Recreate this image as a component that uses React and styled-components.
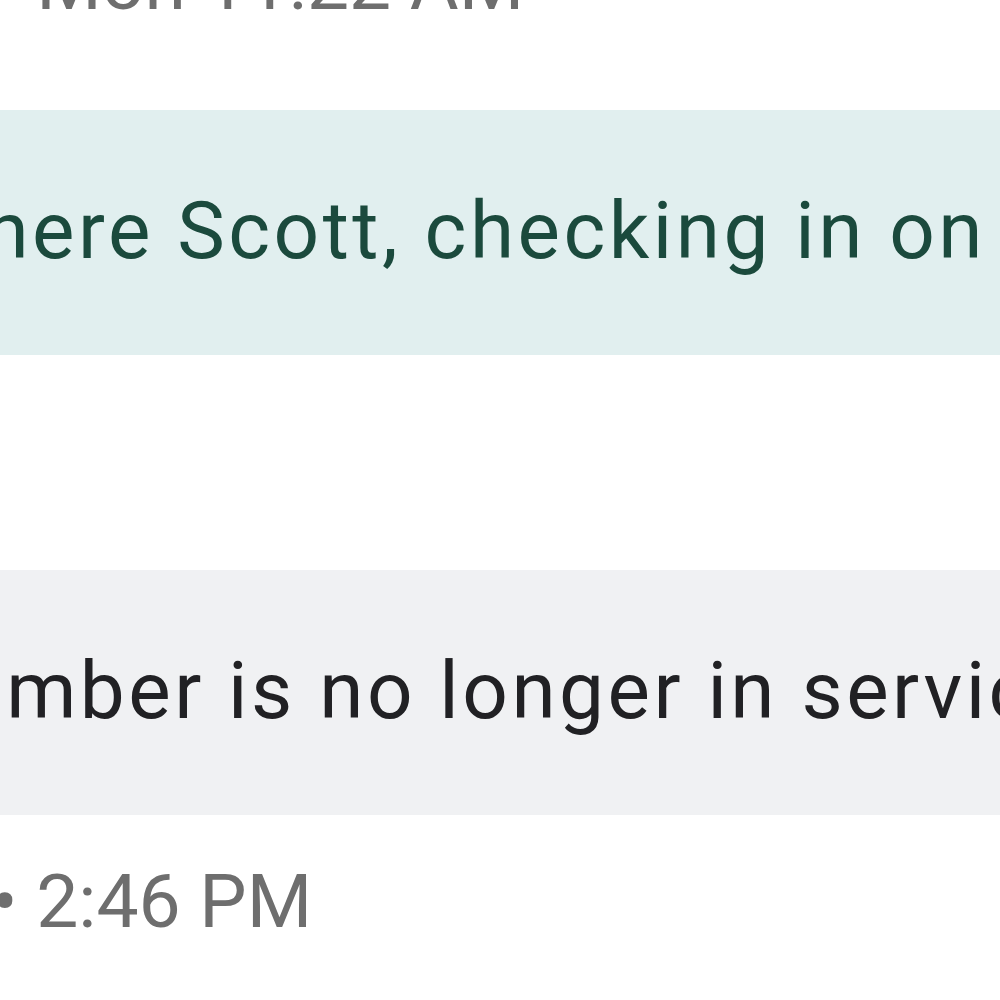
import React from "react";
import styled, { createGlobalStyle } from "styled-components";

const Global = createGlobalStyle`
  html, body { margin: 0; padding: 0; background: #ffffff; }
  body { font-family: Roboto, "Liberation Sans", sans-serif; }
`;

const Viewport = styled.div`
  width: 1000px;
  height: 1000px;
  overflow: hidden;
  background: #ffffff;
`;

const Thread = styled.div`
  display: flex;
  flex-direction: column;
  margin-top: -60px;
  width: 2400px;
`;

const Meta = styled.div`
  font-size: 75px;
  line-height: 86px;
  color: #6e6e6e;
  white-space: nowrap;
  margin-left: ${(p) => -p.$shift}px;
  margin-bottom: ${(p) => p.$after || 0}px;
`;

const Bubble = styled.div`
  background: ${(p) => (p.$tone === "sent" ? "#e1efef" : "#f0f1f3")};
  color: ${(p) => (p.$tone === "sent" ? "#1b4a3d" : "#212124")};
  padding: 64px 0 66px;
  margin-left: -400px;
  margin-bottom: ${(p) => p.$after || 0}px;
`;

const BubbleText = styled.div`
  font-size: 80px;
  line-height: 115px;
  letter-spacing: ${(p) => p.$spacing}px;
  white-space: nowrap;
  margin-left: ${(p) => 400 - p.$shift}px;
`;

export default function App() {
  return (
    <>
      <Global />
      <Viewport>
        <Thread>
          <Meta $shift={202} $after={84}>Scott • Mon 11:22 AM</Meta>
          <Bubble $tone="sent" $after={215}>
            <BubbleText $shift={152} $spacing={3.5}>Hi there Scott, checking in on your recent order.</BubbleText>
          </Bubble>
          <Bubble $tone="received" $after={43}>
            <BubbleText $shift={279} $spacing={3.5}>This number is no longer in service.</BubbleText>
          </Bubble>
          <Meta $shift={202}>Scott • 2:46 PM</Meta>
        </Thread>
      </Viewport>
    </>
  );
}
